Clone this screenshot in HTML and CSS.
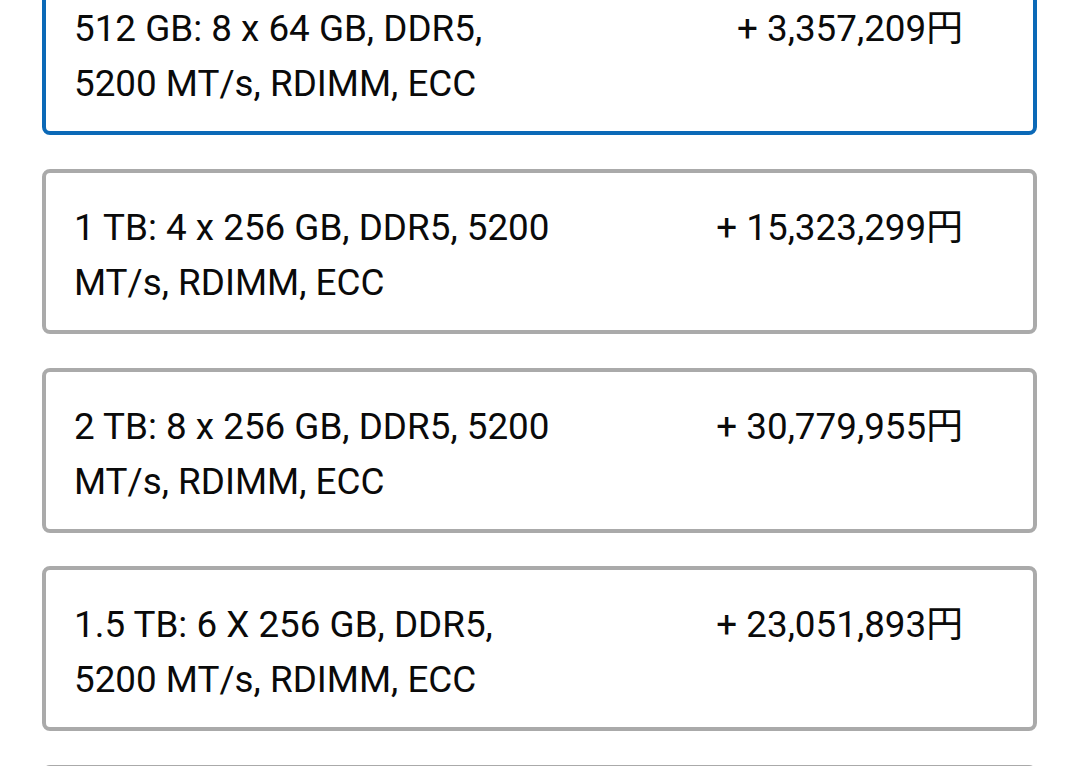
FILE: index.html
```html
<!DOCTYPE html>
<html lang="ja">
<head>
<meta charset="utf-8">
<link rel="stylesheet" href="styles.css">
</head>
<body>
<div class="list">
  <div class="card selected">
    <div class="label">512 GB: 8 x 64 GB, DDR5, 5200 MT/s, RDIMM, ECC</div>
    <div class="price">+ 3,357,209円</div>
  </div>
  <div class="card">
    <div class="label">1 TB: 4 x 256 GB, DDR5, 5200 MT/s, RDIMM, ECC</div>
    <div class="price">+ 15,323,299円</div>
  </div>
  <div class="card">
    <div class="label">2 TB: 8 x 256 GB, DDR5, 5200 MT/s, RDIMM, ECC</div>
    <div class="price">+ 30,779,955円</div>
  </div>
  <div class="card">
    <div class="label">1.5 TB: 6 X 256 GB, DDR5, 5200 MT/s, RDIMM, ECC</div>
    <div class="price">+ 23,051,893円</div>
  </div>
  <div class="card">
    <div class="label">&nbsp;</div>
    <div class="price">&nbsp;</div>
  </div>
</div>
</body>
</html>
```
FILE: styles.css
```css
html, body {
  margin: 0;
  padding: 0;
  background: #ffffff;
  overflow: hidden;
  height: 766px;
}
body {
  font-family: Roboto, "Noto Sans CJK JP", sans-serif;
  color: #0a0a0a;
}
.list {
  display: flex;
  flex-direction: column;
  gap: 33.75px;
  margin: -30px 43px 0 42px;
}
.card {
  box-sizing: border-box;
  height: 165px;
  border: 4px solid #aaaaaa;
  border-radius: 8px;
  padding: 27px 70px 0 28px;
  display: grid;
  grid-template-columns: 482px 1fr;
  align-items: start;
  font-size: 36.8px;
  line-height: 55px;
}
.card.selected {
  border-color: #0b69b7;
}
.price {
  text-align: right;
  white-space: nowrap;
}
```
